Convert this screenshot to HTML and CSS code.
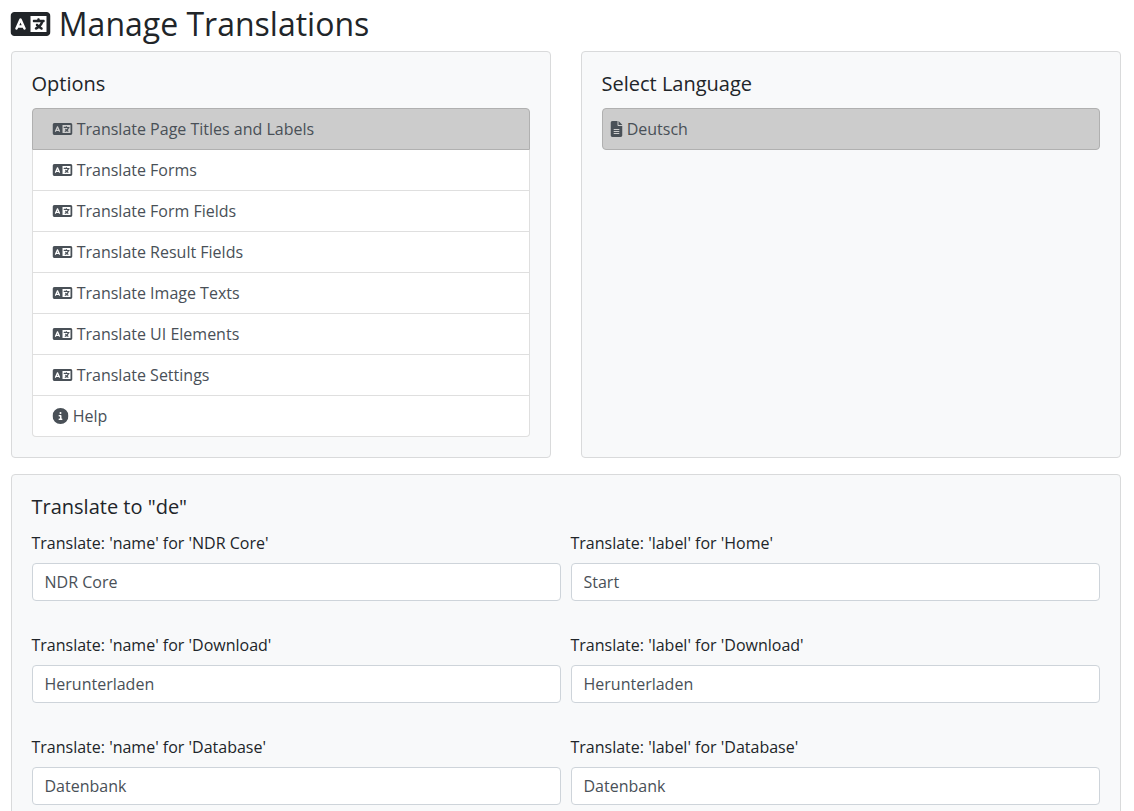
FILE: index.html
```html
<!DOCTYPE html>
<html lang="en">
<head>
<meta charset="utf-8">
<title>Manage Translations</title>
<link rel="stylesheet" href="styles.css">
</head>
<body>
<svg class="sprite" aria-hidden="true">
  <symbol id="language" viewBox="0 0 640 512"><path d="M0 128C0 92.7 28.7 64 64 64H256h48 16H576c35.3 0 64 28.7 64 64V384c0 35.3-28.7 64-64 64H320 304 256 64c-35.3 0-64-28.7-64-64V128zm320 0V384H576V128H320zM178.3 175.9c-3.2-7.2-10.4-11.9-18.3-11.9s-15.1 4.7-18.3 11.9l-64 144c-4.5 10.1 .1 21.9 10.2 26.4s21.9-.1 26.4-10.2l8.9-20.1h73.6l8.9 20.1c4.5 10.1 16.3 14.6 26.4 10.2s14.6-16.3 10.2-26.4l-64-144zM160 233.2L179 276H141l19-42.8zM448 164c11 0 20 9 20 20v4h44 16c11 0 20 9 20 20s-9 20-20 20h-2l-1.6 4.5c-8.9 24.4-22.4 46.6-39.6 65.4c.9 .6 1.8 1.1 2.7 1.6l18.9 11.3c9.5 5.7 12.5 18 6.9 27.4s-18 12.5-27.4 6.9l-18.9-11.3c-4.5-2.7-8.8-5.5-13.1-8.5c-10.6 7.5-21.9 14-34 19.4l-3.6 1.6c-10.1 4.5-21.9-.1-26.4-10.2s.1-21.9 10.2-26.4l3.6-1.6c6.4-2.9 12.6-6.1 18.5-9.8l-12.2-12.2c-7.8-7.8-7.8-20.5 0-28.3s20.5-7.8 28.3 0l14.6 14.6 .5 .5c12.4-13.1 22.5-28.3 29.8-45H448 376c-11 0-20-9-20-20s9-20 20-20h52v-4c0-11 9-20 20-20z"/></symbol>
  <symbol id="file" viewBox="0 0 384 512"><path d="M64 0C28.7 0 0 28.7 0 64V448c0 35.3 28.7 64 64 64H320c35.3 0 64-28.7 64-64V160H256c-17.7 0-32-14.3-32-32V0H64zM256 0V128H384L256 0zM112 256H272c8.8 0 16 7.2 16 16s-7.2 16-16 16H112c-8.8 0-16-7.2-16-16s7.2-16 16-16zm0 64H272c8.8 0 16 7.2 16 16s-7.2 16-16 16H112c-8.8 0-16-7.2-16-16s7.2-16 16-16zm0 64H272c8.8 0 16 7.2 16 16s-7.2 16-16 16H112c-8.8 0-16-7.2-16-16s7.2-16 16-16z"/></symbol>
  <symbol id="info" viewBox="0 0 512 512"><path d="M256 512A256 256 0 1 0 256 0a256 256 0 1 0 0 512zM216 336h24V272H216c-13.300 0-24-10.700-24-24s10.700-24 24-24h48c13.300 0 24 10.700 24 24v88h8c13.300 0 24 10.700 24 24s-10.700 24-24 24H216c-13.300 0-24-10.700-24-24s10.700-24 24-24zm40-208a32 32 0 1 1 0 64 32 32 0 1 1 0-64z"/></symbol>
</svg>
<main class="page">
  <h2 class="page-title"><svg class="icon icon-language"><use href="#language"/></svg> Manage Translations</h2>
  <div class="panels">
    <section class="card">
      <h5 class="card-title">Options</h5>
      <div class="list">
        <a class="item active"><svg class="icon icon-language"><use href="#language"/></svg> Translate Page Titles and Labels</a>
        <a class="item"><svg class="icon icon-language"><use href="#language"/></svg> Translate Forms</a>
        <a class="item"><svg class="icon icon-language"><use href="#language"/></svg> Translate Form Fields</a>
        <a class="item"><svg class="icon icon-language"><use href="#language"/></svg> Translate Result Fields</a>
        <a class="item"><svg class="icon icon-language"><use href="#language"/></svg> Translate Image Texts</a>
        <a class="item"><svg class="icon icon-language"><use href="#language"/></svg> Translate UI Elements</a>
        <a class="item"><svg class="icon icon-language"><use href="#language"/></svg> Translate Settings</a>
        <a class="item"><svg class="icon icon-info"><use href="#info"/></svg> Help</a>
      </div>
    </section>
    <section class="card">
      <h5 class="card-title">Select Language</h5>
      <div class="list list-compact">
        <a class="item active"><svg class="icon icon-file"><use href="#file"/></svg> Deutsch</a>
      </div>
    </section>
  </div>
  <section class="card">
    <h5 class="card-title">Translate to "de"</h5>
    <form class="fields">
      <label class="field">Translate: 'name' for 'NDR Core'<input class="input" type="text" value="NDR Core"></label>
      <label class="field">Translate: 'label' for 'Home'<input class="input" type="text" value="Start"></label>
      <label class="field">Translate: 'name' for 'Download'<input class="input" type="text" value="Herunterladen"></label>
      <label class="field">Translate: 'label' for 'Download'<input class="input" type="text" value="Herunterladen"></label>
      <label class="field">Translate: 'name' for 'Database'<input class="input" type="text" value="Datenbank"></label>
      <label class="field">Translate: 'label' for 'Database'<input class="input" type="text" value="Datenbank"></label>
    </form>
  </section>
</main>
</body>
</html>
```
FILE: styles.css
```css
* { box-sizing: border-box; }
html { overflow: hidden; }
body {
  margin: 0;
  height: 811px;
  overflow: hidden;
  background: #fff;
  color: #212529;
  font: 400 16px/1.5 "Open Sans", "Noto Sans", sans-serif;
}
.sprite { display: none; }
.page { padding: 5px 13.5px 0 10.5px; }
.page-title { margin: 0 0 8px; font-size: 32px; font-weight: 400; line-height: 1.2; }
.icon { height: 1em; overflow: visible; fill: currentColor; vertical-align: -0.125em; }
.icon use { transform: translateX(-0.5px); }
.icon-language { width: 1.25em; }
.icon-file { width: 0.75em; }
.icon-info { width: 1em; }
.panels { display: grid; grid-template-columns: 1fr 1fr; gap: 30px; margin-bottom: 16px; }
.card {
  padding: 20px;
  background: #f8f9fa;
  border: 1px solid #d9dadb;
  border-radius: 4px;
}
.card-title { margin: 0 0 12px; font-size: 20px; font-weight: 400; line-height: 24px; }
.list { display: flex; flex-direction: column; }
.item {
  padding: 8px 20px;
  background: #fff;
  border: 1px solid #dfdfdf;
  color: #495057;
}
.item + .item { border-top: 0; }
.item:first-child { border-top-left-radius: 4px; border-top-right-radius: 4px; }
.item:last-child { border-bottom-left-radius: 4px; border-bottom-right-radius: 4px; }
.item.active { background: #ccc; border-color: #b0b0b0; }
.list-compact .item { padding: 8px; }
.fields { display: grid; grid-template-columns: 1fr 1fr; gap: 32px 10px; }
.field { display: flex; flex-direction: column; gap: 8px; }
.input {
  width: 100%;
  height: 38px;
  padding: 6px 12px;
  background: #fff;
  border: 1px solid #ced4da;
  border-radius: 4px;
  color: #495057;
  font: inherit;
}
```
